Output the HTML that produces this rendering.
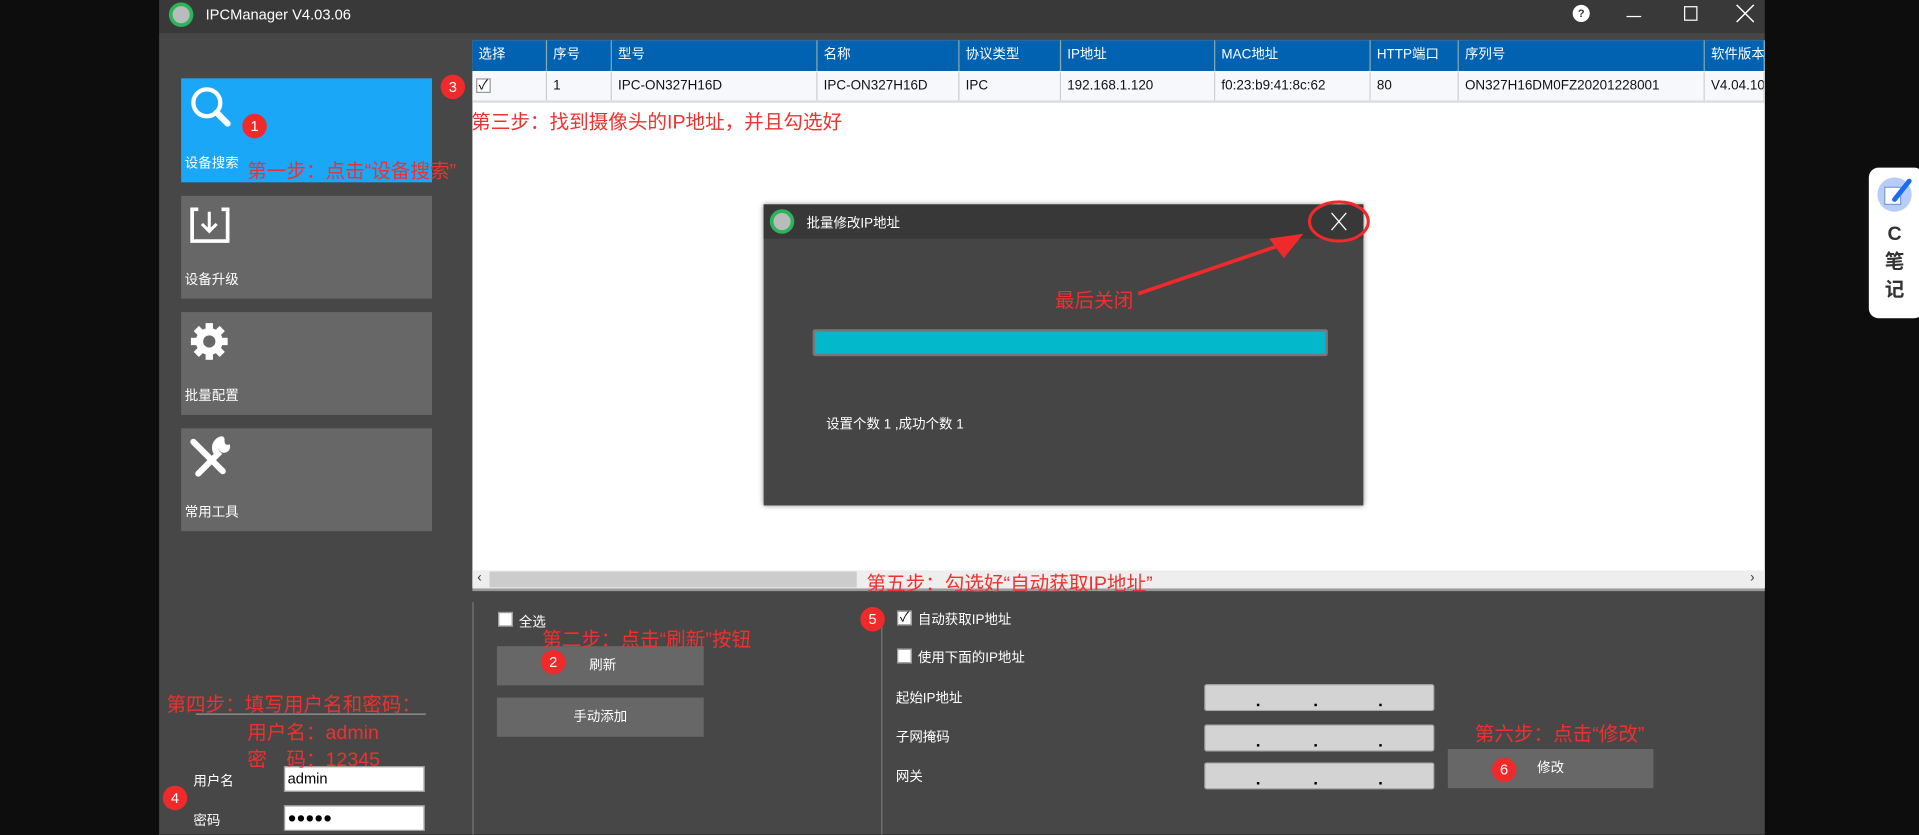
<!DOCTYPE html>
<html><head><meta charset="utf-8"><style>
*{margin:0;padding:0;box-sizing:border-box}
html,body{width:1919px;height:835px;overflow:hidden;background:#0d0d0d}
#w{position:absolute;left:0;top:0;width:1568px;height:682px;transform:scale(1.22385);transform-origin:0 0;font-family:"Liberation Sans","Noto Sans CJK SC",sans-serif;font-size:11px;color:#fff}
.a{position:absolute}
.red{color:#f0302f;font-size:16px;white-space:nowrap}
.b{position:absolute;width:20px;height:20px;border-radius:50%;background:#f02a2a;color:#fff;font-size:12px;text-align:center;line-height:20px}
.tile{position:absolute;left:148px;width:205px;background:#676767}
.tile span{position:absolute;left:3px;bottom:8px;font-size:11px}
.th{position:absolute;top:33px;height:25px;line-height:25px;padding-left:5px;background:#0062b1;border-right:1px solid #8aa;font-size:11px}
.td{position:absolute;top:59px;height:23px;line-height:23px;padding-left:5px;color:#111;border-right:1px solid #ccc;font-size:11px;background:#f7f8fc;white-space:nowrap;overflow:hidden}
.btn{position:absolute;background:#676767;text-align:center;line-height:32px;font-size:11px}
.cb{position:absolute;width:12px;height:12px;background:#fff;border:1px solid #999;color:#000;font-size:11px;line-height:10px;text-align:center}
.ip{position:absolute;left:984px;width:188px;height:22px;background:#d3d3d3;border:1px solid #aaa;border-radius:2px}
.ip i{position:absolute;bottom:3px;width:2px;height:2px;background:#000}
.lb{position:absolute;font-size:11px}
.logo{position:absolute;width:20px;height:20px;border-radius:50%;background:#bbb;border:3px solid #2bb559}
</style></head><body><div id="w">
<div class="a" style="left:130px;top:0;width:1312px;height:27px;background:#393939"></div>
<div class="a" style="left:130px;top:27px;width:1312px;height:655px;background:#474747"></div>
<div class="logo" style="left:138px;top:2px"></div>
<div class="a" style="left:168px;top:5px;font-size:12px">IPCManager V4.03.06</div>
<div class="a" style="left:1285px;top:4px;width:14px;height:14px;border-radius:50%;background:#fff;color:#333;font-size:9px;text-align:center;line-height:14px;font-weight:bold">?</div>
<div class="a" style="left:1329px;top:13px;width:12px;height:1px;background:#fff"></div>
<div class="a" style="left:1376px;top:5px;width:11px;height:12px;border:1px solid #fff"></div>
<svg class="a" style="left:1418px;top:3px" width="16" height="16"><path d="M1 1L15 15M15 1L1 15" stroke="#fff" stroke-width="1.2"/></svg>

<div class="tile" style="top:64px;height:85px;background:#1aa7f8"><span>设备搜索</span></div>
<svg class="a" style="left:153px;top:68px" width="42" height="42"><circle cx="16" cy="16" r="11" fill="none" stroke="#fff" stroke-width="3.5"/><path d="M24 24L33 33" stroke="#fff" stroke-width="5" stroke-linecap="round"/></svg>
<div class="tile" style="top:160px;height:84px"><span>设备升级</span></div>
<svg class="a" style="left:154px;top:167px" width="36" height="36"><path d="M8 4H3V30H32V4H27" fill="none" stroke="#fff" stroke-width="3"/><path d="M17 6V22M11 16L17 22L23 16" fill="none" stroke="#fff" stroke-width="2.5"/></svg>
<div class="tile" style="top:255px;height:84px"><span>批量配置</span></div>
<svg class="a" style="left:154px;top:262px" width="36" height="36"><g fill="#fff"><circle cx="17" cy="17" r="11"/><rect x="14" y="2" width="6" height="30"/><rect x="2" y="14" width="30" height="6"/><rect x="14" y="2" width="6" height="30" transform="rotate(45 17 17)"/><rect x="14" y="2" width="6" height="30" transform="rotate(-45 17 17)"/></g><circle cx="17" cy="17" r="5" fill="#676767"/></svg>
<div class="tile" style="top:350px;height:84px"><span>常用工具</span></div>
<svg class="a" style="left:152px;top:355px" width="40" height="40"><path d="M6 6L30 30" stroke="#fff" stroke-width="5" stroke-linecap="round"/><path d="M29 4A7 7 0 0 0 26 16L10 32" stroke="#fff" stroke-width="5" fill="none" stroke-linecap="round"/><circle cx="31" cy="10" r="5" fill="#fff"/><circle cx="34" cy="6" r="2.5" fill="#676767"/></svg>

<div class="a" style="left:386px;top:33px;width:1056px;height:447px;background:#fff"></div>
<div class="th" style="left:386px;width:61px">选择</div><div class="th" style="left:447px;width:53px">序号</div><div class="th" style="left:500px;width:168px">型号</div><div class="th" style="left:668px;width:116px">名称</div><div class="th" style="left:784px;width:83px">协议类型</div><div class="th" style="left:867px;width:126px">IP地址</div><div class="th" style="left:993px;width:127px">MAC地址</div><div class="th" style="left:1120px;width:72px">HTTP端口</div><div class="th" style="left:1192px;width:201px">序列号</div><div class="th" style="left:1393px;width:49px;white-space:nowrap;overflow:hidden">软件版本</div>
<div class="td" style="left:386px;width:61px"></div><div class="td" style="left:447px;width:53px">1</div><div class="td" style="left:500px;width:168px">IPC-ON327H16D</div><div class="td" style="left:668px;width:116px">IPC-ON327H16D</div><div class="td" style="left:784px;width:83px">IPC</div><div class="td" style="left:867px;width:126px">192.168.1.120</div><div class="td" style="left:993px;width:127px">f0:23:b9:41:8c:62</div><div class="td" style="left:1120px;width:72px">80</div><div class="td" style="left:1192px;width:201px">ON327H16DM0FZ20201228001</div><div class="td" style="left:1393px;width:49px">V4.04.10</div>
<div class="cb" style="left:389px;top:64px">✓</div>
<div class="a" style="left:386px;top:82px;width:1056px;height:2px;background:#ddd"></div>
<div class="a" style="left:386px;top:466px;width:1056px;height:15px;background:#eee"></div>
<div class="a" style="left:400px;top:467px;width:300px;height:13px;background:#ccc"></div>
<div class="a" style="left:390px;top:466px;color:#333;font-size:11px">‹</div>
<div class="a" style="left:1430px;top:466px;color:#333;font-size:11px">›</div>
<div class="a" style="left:386px;top:481px;width:1056px;height:2px;background:#999"></div>

<div class="a" style="left:624px;top:167px;width:490px;height:246px;background:#454545;box-shadow:0 0 4px #888"></div>
<div class="a" style="left:624px;top:167px;width:490px;height:28px;background:#383838"></div>
<div class="logo" style="left:629px;top:171px"></div>
<div class="a" style="left:659px;top:174px">批量修改IP地址</div>
<svg class="a" style="left:1068px;top:162px" width="52" height="38"><ellipse cx="26" cy="19" rx="24" ry="16" fill="none" stroke="#f02a2a" stroke-width="2.5"/><path d="M20 12L32 26M32 12L20 26" stroke="#fff" stroke-width="1"/></svg>
<svg class="a" style="left:925px;top:185px" width="150" height="60"><path d="M5 55L125 14" stroke="#f02a2a" stroke-width="3"/><path d="M140 6L112 10L124 26Z" fill="#f02a2a"/></svg>
<div class="a red" style="left:862px;top:232px">最后关闭</div>
<div class="a" style="left:664px;top:269px;width:421px;height:22px;background:#04b8cc;border:2px solid #777;border-radius:2px"></div>
<div class="a" style="left:675px;top:338px">设置个数 1 ,成功个数 1</div>

<div class="a" style="left:386px;top:492px;width:1px;height:190px;background:#777"></div>
<div class="a" style="left:720px;top:510px;width:1px;height:172px;background:#777"></div>
<div class="cb" style="left:407px;top:500px"></div><div class="lb" style="left:424px;top:500px">全选</div>
<div class="btn" style="left:406px;top:528px;width:169px;padding-left:4px">刷新</div>
<div class="btn" style="left:406px;top:570px;width:169px">手动添加</div>
<div class="cb" style="left:733px;top:499px">✓</div><div class="lb" style="left:750px;top:498px">自动获取IP地址</div>
<div class="cb" style="left:733px;top:530px"></div><div class="lb" style="left:750px;top:529px">使用下面的IP地址</div>
<div class="lb" style="left:732px;top:562px">起始IP地址</div><div class="lb" style="left:732px;top:594px">子网掩码</div><div class="lb" style="left:732px;top:626px">网关</div>
<div class="ip" style="top:559px"><i style="left:42px"></i><i style="left:89px"></i><i style="left:142px"></i></div>
<div class="ip" style="top:592px"><i style="left:42px"></i><i style="left:89px"></i><i style="left:142px"></i></div>
<div class="ip" style="top:623px"><i style="left:42px"></i><i style="left:89px"></i><i style="left:142px"></i></div>
<div class="btn" style="left:1183px;top:612px;width:168px">修改</div>

<div class="lb" style="left:158px;top:630px">用户名</div>
<div class="a" style="left:232px;top:626px;width:115px;height:21px;background:#fff;border:1px solid #999;color:#000;font-size:12px;padding-left:2px;line-height:19px">admin</div>
<div class="lb" style="left:158px;top:662px">密码</div>
<div class="a" style="left:232px;top:658px;width:115px;height:21px;background:#fff;border:1px solid #999;color:#000;font-size:12px;padding-left:2px;line-height:19px">●●●●●</div>

<div class="a red" style="left:385px;top:86px">第三步：找到摄像头的IP地址，并且勾选好</div>
<div class="a red" style="left:202px;top:126px">第一步：点击“设备搜索”</div>
<div class="a red" style="left:443px;top:509px">第二步：点击“刷新”按钮</div>
<div class="a red" style="left:708px;top:463px">第五步：勾选好“自动获取IP地址”</div>
<div class="a red" style="left:1205px;top:586px">第六步：点击“修改”</div>
<div class="a red" style="left:136px;top:562px">第四步：填写用户名和密码：</div>
<div class="a" style="left:160px;top:583px;width:188px;height:1px;background:#999"></div>
<div class="a red" style="left:202px;top:585px">用户名：admin</div>
<div class="a red" style="left:202px;top:607px">密　码：12345</div>

<div class="b" style="left:198px;top:93px">1</div>
<div class="b" style="left:360px;top:61px">3</div>
<div class="b" style="left:442px;top:531px">2</div>
<div class="b" style="left:703px;top:496px">5</div>
<div class="b" style="left:1219px;top:619px">6</div>
<div class="b" style="left:133px;top:642px">4</div>

<div class="a" style="left:1527px;top:137px;width:45px;height:123px;background:#fff;border-radius:8px"></div>
<div class="a" style="left:1534px;top:145px;width:28px;height:28px;border-radius:50%;background:#b8cdf5"></div>
<svg class="a" style="left:1536px;top:145px" width="28" height="28"><rect x="4" y="8" width="13" height="14" fill="#fff" stroke="#7a9ae0"/><path d="M12 18L24 3" stroke="#1a6cf0" stroke-width="4" stroke-linecap="round"/></svg>
<div class="a" style="left:1536px;top:180px;width:24px;text-align:center;color:#333;font-size:16px;font-weight:bold;line-height:23px">C<br>笔<br>记</div>
</div></body></html>
